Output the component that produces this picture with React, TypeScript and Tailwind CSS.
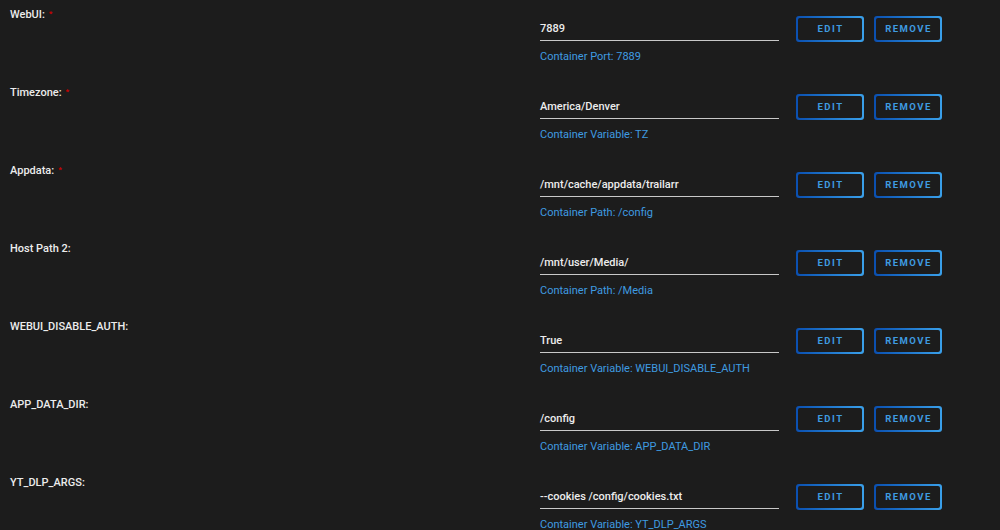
import React from 'react';

type Row = {
    label: string;
    required?: boolean;
    value: string;
    hint: string;
};

const ROWS: Row[] = [
    { label: "WebUI:", required: true, value: "7889", hint: "Container Port: 7889" },
    { label: "Timezone:", required: true, value: "America/Denver", hint: "Container Variable: TZ" },
    { label: "Appdata:", required: true, value: "/mnt/cache/appdata/trailarr", hint: "Container Path: /config" },
    { label: "Host Path 2:", value: "/mnt/user/Media/", hint: "Container Path: /Media" },
    { label: "WEBUI_DISABLE_AUTH:", value: "True", hint: "Container Variable: WEBUI_DISABLE_AUTH" },
    { label: "APP_DATA_DIR:", value: "/config", hint: "Container Variable: APP_DATA_DIR" },
    { label: "YT_DLP_ARGS:", value: "--cookies /config/cookies.txt", hint: "Container Variable: YT_DLP_ARGS" },
];

function OutlineButton({ children }: { children: React.ReactNode }) {
    return (
        <div className="w-[68px] h-[26px] rounded-[3px] p-[2px] bg-gradient-to-r from-[#0b4fb0] to-[#3aa0ea]">
            <div className="w-full h-full rounded-[2px] bg-[#1c1c1c] flex items-center justify-center text-[9.5px] font-bold tracking-[1.5px] text-[#3f9be0] pl-[1px]">
                {children}
            </div>
        </div>
    );
}

export default function App() {
    return (
        <div
            className="w-[1000px] h-[530px] overflow-hidden bg-[#1c1c1c] text-[#ececec]"
            style={{ fontFamily: 'Roboto, "Liberation Sans", Arial, sans-serif' }}
        >
            {ROWS.map((row) => (
                <div key={row.label} className="flex h-[78px]">
                    <div className="w-[540px] pl-[10px] pt-[8px] text-[11px] leading-[14px] font-medium">
                        {row.label}
                        {row.required && (
                            <span className="relative -top-[2px] ml-[4px] text-[#c00] text-[8px] font-bold">*</span>
                        )}
                    </div>
                    <div className="w-[239px] pt-[21px]">
                        <div className="border-b border-[#c8c8c8] text-[11px] leading-[16px] font-medium pb-[3px]">
                            {row.value}
                        </div>
                        <div className="mt-[9px] text-[11px] leading-[14px] text-[#3f9be0]">{row.hint}</div>
                    </div>
                    <div className="flex gap-[10px] ml-[17px] pt-[16px]">
                        <OutlineButton>EDIT</OutlineButton>
                        <OutlineButton>REMOVE</OutlineButton>
                    </div>
                </div>
            ))}
        </div>
    );
}
